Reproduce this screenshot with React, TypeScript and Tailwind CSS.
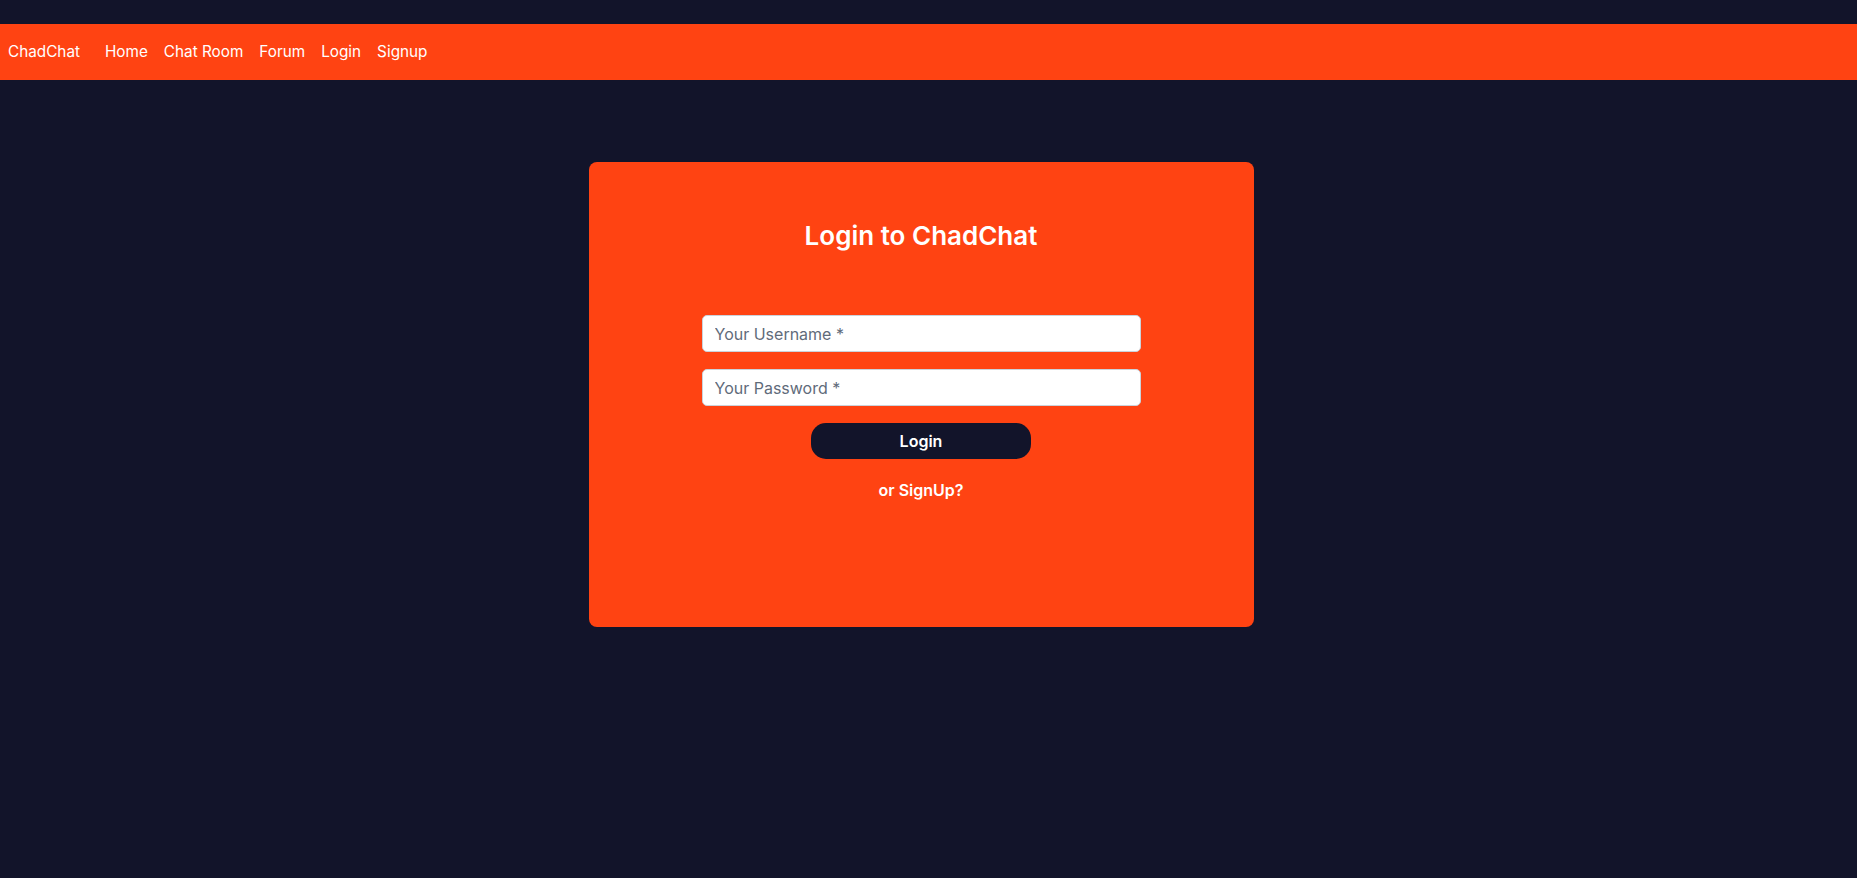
import React from "react";

export default function App() {
  const links = ["Home", "Chat Room", "Forum", "Login", "Signup"];
  return (
    <div
      className="min-h-screen w-full bg-[#12142a] pt-[24px]"
      style={{ fontFamily: "Inter, 'Noto Sans', sans-serif" }}
    >
      <nav className="flex h-[56px] items-center bg-[#ff4312] pl-[8px] text-[15.3px] text-white">
        <span className="mr-[25px]">ChadChat</span>
        <div className="flex items-center gap-[16px]">
          {links.map((l) => (
            <a key={l} className="cursor-pointer">
              {l}
            </a>
          ))}
        </div>
      </nav>
      <main className="flex justify-center pr-[15px] pt-[82px]">
        <div className="flex h-[465px] w-[665px] flex-col items-center rounded-lg bg-[#ff4312] pt-[58px]">
          <h2 className="text-[26px] font-semibold leading-[32px] text-white">
            Login to ChadChat
          </h2>
          <form className="mt-[63px] flex flex-col items-center">
            <input
              type="text"
              placeholder="Your Username *"
              className="h-[37px] w-[439px] rounded-[5px] border border-[#cbd2da] bg-white px-[12px] text-[16px] text-[#1f2937] placeholder:text-[#5f6b7a] outline-none"
            />
            <input
              type="password"
              placeholder="Your Password *"
              className="mt-[17px] h-[37px] w-[439px] rounded-[5px] border border-[#cbd2da] bg-white px-[12px] text-[16px] text-[#1f2937] placeholder:text-[#5f6b7a] outline-none"
            />
            <button
              type="button"
              className="mt-[17px] h-[36px] w-[220px] rounded-[15px] bg-[#12142a] text-[16px] font-semibold text-white"
            >
              Login
            </button>
            <a className="mt-[19px] cursor-pointer text-[16px] font-semibold leading-[24px] text-white">
              or SignUp?
            </a>
          </form>
        </div>
      </main>
    </div>
  );
}
